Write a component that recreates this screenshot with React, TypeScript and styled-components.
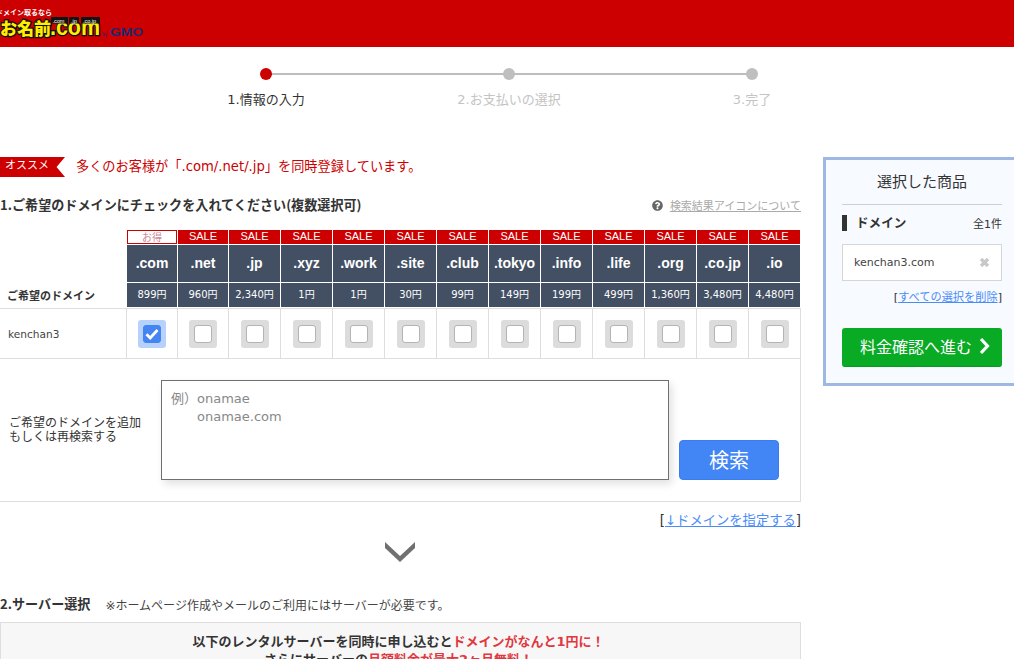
import React from "react";
import styled, { createGlobalStyle } from "styled-components";
import { FaQuestionCircle } from "react-icons/fa";

const Global = createGlobalStyle`
  html, body { margin: 0; padding: 0; height: 659px; overflow: hidden; background: #fff; }
  body { font-family: "DejaVu Sans", "Noto Sans CJK JP", sans-serif; color: #333; }
  #root { width: 1014px; height: 659px; overflow: hidden; }
  * { box-sizing: border-box; }
`;

const Header = styled.header`
  height: 47px;
  background: #cc0000;
`;
const LogoSvg = styled.svg`
  display: block;
`;

const Stepper = styled.ol`
  list-style: none;
  display: flex;
  margin: 0 0 0 144.5px;
  padding: 21px 0 0;
  height: 63px;
`;
const Step = styled.li<{ $active?: boolean; $last?: boolean }>`
  position: relative;
  width: 243px;
  display: flex;
  flex-direction: column;
  align-items: center;
  gap: 13px;
  font-size: 13px;
  line-height: 14px;
  color: ${(p) => (p.$active ? "#333" : "#c4c4c4")};
  &::after {
    content: "";
    display: ${(p) => (p.$last ? "none" : "block")};
    position: absolute;
    left: 50%;
    top: 5px;
    width: 243px;
    height: 2px;
    background: #bdbdbd;
  }
`;
const Dot = styled.span<{ $active?: boolean }>`
  position: relative;
  z-index: 1;
  width: 12px;
  height: 12px;
  border-radius: 50%;
  background: ${(p) => (p.$active ? "#cc0000" : "#bfbfbf")};
`;

const Columns = styled.div`
  display: flex;
  align-items: flex-start;
  margin-top: 47px;
  width: 1030px;
`;
const Main = styled.main`
  width: 801px;
  flex-shrink: 0;
`;

const Recommend = styled.div`
  display: flex;
  align-items: flex-start;
  gap: 11px;
  height: 20px;
`;
const RibbonBadge = styled.span`
  width: 65px;
  height: 20px;
  padding-left: 5px;
  background: #cc0000;
  color: #fff;
  font-size: 11px;
  line-height: 18px;
  clip-path: polygon(0 0, 100% 0, 87% 50%, 100% 100%, 0 100%);
`;
const RecommendText = styled.span`
  color: #cc0000;
  font-size: 13.2px;
  line-height: 20px;
`;

const HeadingRow = styled.div`
  display: flex;
  align-items: center;
  justify-content: space-between;
  height: 20px;
  margin: 18px 0 15px;
`;
const Heading = styled.h2`
  margin: 0;
  padding-bottom: 2px;
  font-family: "Noto Sans CJK JP", sans-serif;
  font-size: 13.1px;
  font-weight: 700;
  color: #333;
`;
const HelpLink = styled.a`
  display: flex;
  align-items: center;
  gap: 7px;
  font-size: 11px;
  color: #aaa;
  span { text-decoration: underline; }
  svg { color: #666; width: 11px; height: 11px; }
`;

const GridRow = styled.div`
  display: grid;
  grid-template-columns: 127px 51px 51px repeat(11, 52px);
`;
const BadgeRow = styled(GridRow)`
  height: 15px;
`;
const Badge = styled.div<{ $deal?: boolean }>`
  height: 14px;
  margin-right: 1px;
  background: ${(p) => (p.$deal ? "#fff" : "#cc0000")};
  border: ${(p) => (p.$deal ? "1px solid #cc0000" : "0")};
  color: ${(p) => (p.$deal ? "#c98a96" : "#fff")};
  font-family: "Liberation Sans", "Noto Sans CJK JP", sans-serif;
  font-size: ${(p) => (p.$deal ? "10px" : "11px")};
  line-height: 13px;
  text-align: center;
`;
const TldRow = styled(GridRow)`
  height: 38px;
`;
const Tld = styled.div`
  height: 37px;
  margin-right: 1px;
  background: #434f63;
  color: #fff;
  font-family: "Liberation Sans", sans-serif;
  font-weight: 700;
  font-size: 14px;
  line-height: 36px;
  text-align: center;
`;
const PriceRow = styled(GridRow)`
  height: 25px;
`;
const RowLabel = styled.div`
  font-family: "Noto Sans CJK JP", sans-serif;
  font-size: 11px;
  font-weight: 700;
  line-height: 24px;
  padding-left: 7px;
  color: #333;
`;
const Price = styled.div`
  height: 24px;
  margin-right: 1px;
  background: #434f63;
  color: #fff;
  font-size: 10px;
  line-height: 23px;
  text-align: center;
  white-space: nowrap;
`;
const CheckRow = styled(GridRow)`
  border-top: 1px solid #dedede;
  border-bottom: 1px solid #dedede;
  height: 51px;
`;
const NameCell = styled.div`
  display: flex;
  align-items: center;
  padding-left: 8px;
  font-size: 10.6px;
  color: #444;
  border-right: 1px solid #dedede;
`;
const CheckCell = styled.div`
  display: flex;
  align-items: center;
  justify-content: center;
  border-right: 1px solid #dedede;
`;
const CheckOuter = styled.label<{ $on?: boolean }>`
  width: 28px;
  height: 28px;
  border-radius: 3px;
  background: ${(p) => (p.$on ? "#b5d1fc" : "#dcdcdc")};
  display: flex;
  align-items: center;
  justify-content: center;
`;
const CheckInner = styled.span<{ $on?: boolean }>`
  width: 18px;
  height: 18px;
  border-radius: 3px;
  background: ${(p) => (p.$on ? "#4585f2" : "#fff")};
  border: 1px solid ${(p) => (p.$on ? "#4585f2" : "#b4b4b4")};
  display: flex;
  align-items: center;
  justify-content: center;
`;

const SearchRow = styled.div`
  display: flex;
  align-items: flex-end;
  height: 143px;
  padding: 21px 0 21px 9px;
  border-right: 1px solid #dedede;
  border-bottom: 1px solid #dedede;
`;
const SearchLabel = styled.div`
  align-self: center;
  width: 152px;
  font-size: 12px;
  line-height: 14px;
  color: #333;
`;
const SearchBox = styled.textarea`
  width: 508px;
  height: 100px;
  padding: 9px 9px;
  border: 1px solid #707070;
  border-radius: 0;
  background: #fff;
  box-shadow: 3px 4px 8px rgba(0, 0, 0, 0.12);
  font-family: "DejaVu Sans", "Noto Sans CJK JP", sans-serif;
  font-size: 13px;
  line-height: 18px;
  resize: none;
  outline: none;
  &::placeholder { color: #888; opacity: 1; }
`;
const SearchButton = styled.button`
  width: 100px;
  height: 40px;
  margin-left: 10px;
  border: 1px solid #3b7df0;
  border-radius: 4px;
  background: #4285f4;
  color: #fff;
  font-family: "Noto Sans CJK JP", sans-serif;
  font-size: 20px;
  line-height: 36px;
  padding: 0;
`;

const LinkRow = styled.div`
  margin-top: 10px;
  height: 18px;
  text-align: right;
  font-size: 13.3px;
  line-height: 18px;
  color: #333;
`;
const BlueLink = styled.a`
  color: #4a8cf7;
  text-decoration: underline;
`;
const ChevronWrap = styled.div`
  display: flex;
  justify-content: center;
  margin-top: 12px;
  padding-right: 2px;
  height: 20px;
`;
const ServerHeading = styled.div`
  display: flex;
  align-items: center;
  gap: 15px;
  height: 18px;
  margin-top: 33px;
`;
const Note = styled.span`
  font-size: 12px;
  color: #444;
`;
const Promo = styled.div`
  margin-top: 9px;
  height: 120px;
  padding: 10px 4px 0 0;
  background: #f7f7f7;
  border: 1px solid #dedede;
  border-bottom: 0;
  text-align: center;
  font-size: 13px;
  font-weight: 700;
  line-height: 18px;
  color: #333;
`;
const Red = styled.span`
  color: #e0383e;
`;

const Side = styled.aside`
  width: 198px;
  height: 229px;
  flex-shrink: 0;
  margin-left: 22px;
  padding: 0 16px;
  border: 3px solid #9fb8e3;
  background: #f7faff;
`;
const SideTitle = styled.div`
  height: 45px;
  border-bottom: 1px solid #cfcfcf;
  font-size: 15px;
  line-height: 44px;
  text-align: center;
  color: #333;
`;
const SideHead = styled.div`
  display: flex;
  align-items: center;
  justify-content: space-between;
  height: 16px;
  margin-top: 10px;
`;
const SideHeadTitle = styled.div`
  border-left: 5px solid #333;
  padding-left: 9px;
  height: 16px;
  font-size: 12.6px;
  font-weight: 700;
  line-height: 15px;
  color: #333;
`;
const Count = styled.span`
  font-size: 11px;
  color: #333;
`;
const Selected = styled.div`
  display: flex;
  align-items: center;
  justify-content: space-between;
  height: 37px;
  margin-top: 13px;
  padding: 0 11px;
  background: #fff;
  border: 1px solid #d6d6d6;
  font-size: 11px;
  color: #444;
`;
const ClearRow = styled.div`
  margin-top: 9px;
  height: 16px;
  text-align: right;
  font-size: 11.2px;
  line-height: 16px;
  color: #333;
`;
const ProceedButton = styled.button`
  display: flex;
  align-items: center;
  justify-content: center;
  gap: 7px;
  width: 160px;
  height: 39px;
  margin-top: 22px;
  padding: 0 0 3px 6px;
  border: 0;
  border-bottom: 1px solid #0a9a22;
  border-radius: 3px;
  background: #09ab25;
  color: #fff;
  font-family: "Noto Sans CJK JP", sans-serif;
  font-size: 16px;
  font-weight: 400;
`;

const tlds = [".com", ".net", ".jp", ".xyz", ".work", ".site", ".club", ".tokyo", ".info", ".life", ".org", ".co.jp", ".io"];
const prices = ["899円", "960円", "2,340円", "1円", "1円", "30円", "99円", "149円", "199円", "499円", "1,360円", "3,480円", "4,480円"];

const Logo = () => (
  <LogoSvg width="150" height="47" viewBox="0 0 150 47">
    <text x="-4" y="15" fontSize="7" fontWeight="700" fill="#fff" fontFamily="Noto Sans CJK JP">ドメイン取るなら</text>
    <g stroke="#111" strokeWidth="2.6" paintOrder="stroke" fill="#ffee00" fontWeight="900">
      <text x="0" y="35" fontSize="17" fontFamily="Noto Sans CJK JP">お名前</text>
      <text x="50" y="35" fontSize="23" fontFamily="Liberation Sans" fontWeight="700" textLength="50" lengthAdjust="spacingAndGlyphs">.com</text>
    </g>
    <rect x="51" y="17" width="17" height="6.5" fill="#111" />
    <rect x="69" y="17" width="10" height="6.5" fill="#111" />
    <rect x="81" y="17" width="19" height="6.5" fill="#111" />
    <text x="52.5" y="22.5" fontSize="5.5" fill="#fff" fontFamily="Liberation Sans">.com</text>
    <text x="71" y="22.5" fontSize="5.5" fill="#fff" fontFamily="Liberation Sans">.jp</text>
    <text x="83" y="22.5" fontSize="5.5" fill="#fff" fontFamily="Liberation Sans">.co.jp</text>
    <text x="102" y="36" fontSize="5" fill="#1c2a6e" fontFamily="Liberation Sans">by</text>
    <text x="110" y="36" fontSize="10" fontWeight="700" fill="#1c2a6e" fontFamily="Liberation Sans" textLength="33" lengthAdjust="spacingAndGlyphs">GMO</text>
  </LogoSvg>
);

export default function App() {
  return (
    <>
      <Global />
      <Header>
        <Logo />
      </Header>
      <Stepper>
        <Step $active><Dot $active />1.情報の入力</Step>
        <Step><Dot />2.お支払いの選択</Step>
        <Step $last><Dot />3.完了</Step>
      </Stepper>
      <Columns>
        <Main>
          <Recommend>
            <RibbonBadge>オススメ</RibbonBadge>
            <RecommendText>多くのお客様が「.com/.net/.jp」を同時登録しています。</RecommendText>
          </Recommend>
          <HeadingRow>
            <Heading>1.ご希望のドメインにチェックを入れてください(複数選択可)</Heading>
            <HelpLink><FaQuestionCircle /><span>検索結果アイコンについて</span></HelpLink>
          </HeadingRow>
          <BadgeRow>
            <div />
            {tlds.map((t, i) => <Badge key={t} $deal={i === 0}>{i === 0 ? "お得" : "SALE"}</Badge>)}
          </BadgeRow>
          <TldRow>
            <div />
            {tlds.map((t) => <Tld key={t}>{t}</Tld>)}
          </TldRow>
          <PriceRow>
            <RowLabel>ご希望のドメイン</RowLabel>
            {prices.map((p, i) => <Price key={tlds[i]}>{p}</Price>)}
          </PriceRow>
          <CheckRow>
            <NameCell>kenchan3</NameCell>
            {tlds.map((t, i) => (
              <CheckCell key={t}>
                <CheckOuter $on={i === 0}>
                  <CheckInner $on={i === 0}>
                    {i === 0 && (
                      <svg width="14" height="12" viewBox="0 0 14 12">
                        <path d="M1.5 6.2 L5.2 10 L12.5 2" fill="none" stroke="#fff" strokeWidth="2.8" />
                      </svg>
                    )}
                  </CheckInner>
                </CheckOuter>
              </CheckCell>
            ))}
          </CheckRow>
          <SearchRow>
            <SearchLabel>ご希望のドメインを追加<br />もしくは再検索する</SearchLabel>
            <SearchBox placeholder={"例）onamae\n　　onamae.com"} />
            <SearchButton>検索</SearchButton>
          </SearchRow>
          <LinkRow>[<BlueLink>↓ドメインを指定する</BlueLink>]</LinkRow>
          <ChevronWrap>
            <svg width="30" height="20" viewBox="0 0 30 20">
              <path d="M0 0 L15 14 L30 0 L30 6 L15 20 L0 6 Z" fill="#707070" />
            </svg>
          </ChevronWrap>
          <ServerHeading>
            <Heading>2.サーバー選択</Heading>
            <Note>※ホームページ作成やメールのご利用にはサーバーが必要です。</Note>
          </ServerHeading>
          <Promo>
            以下のレンタルサーバーを同時に申し込むと<Red>ドメインがなんと1円に！</Red><br />
            さらにサーバーの<Red>月額料金が最大2ヶ月無料！</Red>
          </Promo>
        </Main>
        <Side>
          <SideTitle>選択した商品</SideTitle>
          <SideHead>
            <SideHeadTitle>ドメイン</SideHeadTitle>
            <Count>全1件</Count>
          </SideHead>
          <Selected>
            kenchan3.com
            <svg width="11" height="11" viewBox="0 0 11 11">
              <path d="M2 2 L9 9 M9 2 L2 9" stroke="#c8c8c8" strokeWidth="3.2" />
            </svg>
          </Selected>
          <ClearRow>[<BlueLink>すべての選択を削除</BlueLink>]</ClearRow>
          <ProceedButton>
            料金確認へ進む
            <svg width="11" height="18" viewBox="0 0 11 18">
              <path d="M2 2 L8.5 9 L2 16" fill="none" stroke="#fff" strokeWidth="3.2" />
            </svg>
          </ProceedButton>
        </Side>
      </Columns>
    </>
  );
}
